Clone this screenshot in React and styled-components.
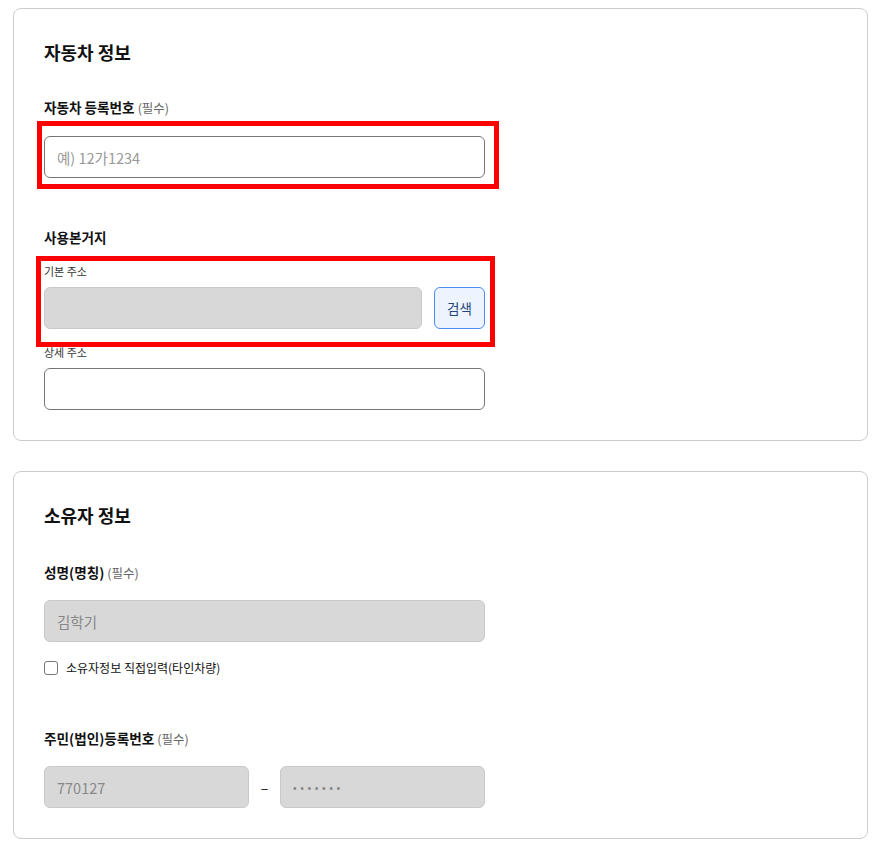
import React from "react";
import styled, { createGlobalStyle } from "styled-components";

const Global = createGlobalStyle`
  * { box-sizing: border-box; }
  body {
    margin: 0;
    background: #fff;
    font-family: "Noto Sans CJK KR", "Noto Sans", sans-serif;
    color: #111;
  }
`;

const Page = styled.div`
  padding: 8px 15px 20px 13px;
  display: flex;
  flex-direction: column;
  gap: 30px;
`;

const Card = styled.section`
  border: 1px solid #cccccc;
  border-radius: 8px;
  padding: 30px 30px 30px;
  display: flex;
  flex-direction: column;
`;

const Title = styled.h2`
  margin: 0 0 ${(p) => p.$gap || 32}px;
  font-size: 18px;
  line-height: 26px;
  font-weight: 700;
  color: #111;
`;

const Label = styled.div`
  display: flex;
  align-items: baseline;
  height: 20px;
  font-size: 13.6px;
  line-height: 20px;
  font-weight: 700;
  color: #111;
  margin-bottom: ${(p) => p.$mb ?? 19}px;
  margin-top: ${(p) => p.$mt ?? 0}px;
`;

const Req = styled.span`
  font-weight: 400;
  font-size: 12.5px;
  line-height: 20px;
  color: #666;
  margin-left: 3px;
`;

const SubLabel = styled.div`
  font-size: 11px;
  line-height: 16px;
  color: #333;
  margin-bottom: 8px;
  margin-top: ${(p) => p.$mt ?? 0}px;
`;

const Field = styled.div`
  position: relative;
  width: 441px;
`;

const Highlight = styled.div`
  position: absolute;
  left: ${(p) => p.$l}px;
  top: ${(p) => p.$t}px;
  right: ${(p) => p.$r}px;
  bottom: ${(p) => p.$b}px;
  border: 5px solid #ff0000;
  pointer-events: none;
`;

const Input = styled.input`
  display: block;
  width: ${(p) => (p.$w ? p.$w + "px" : "100%")};
  height: 42px;
  padding: 0 12px;
  border-radius: 6px;
  border: 1px solid ${(p) => (p.$disabled ? "#c9c9c9" : "#777777")};
  background: ${(p) => (p.$disabled ? "#d8d8d8" : "#ffffff")};
  font-family: inherit;
  font-size: 14.5px;
  color: #888;
  outline: none;
  &::placeholder {
    color: #999;
  }
  &[type="password"] {
    letter-spacing: 3.5px;
    font-size: 11px;
    color: #888;
  }
`;

const Row = styled.div`
  display: flex;
  align-items: center;
  gap: 12px;
  width: 441px;
`;

const SearchButton = styled.button`
  width: 51px;
  height: 42px;
  flex: none;
  border: 1px solid #4a8cf0;
  border-radius: 6px;
  background: #edf4ff;
  color: #24467e;
  font-family: inherit;
  font-size: 13.5px;
  cursor: pointer;
  padding: 0;
`;

const CheckRow = styled.label`
  display: flex;
  align-items: center;
  gap: 8px;
  margin-top: 18px;
  font-size: 12px;
  line-height: 16px;
  color: #111;
`;

const Box = styled.span`
  width: 14px;
  height: 14px;
  border: 1px solid #767676;
  border-radius: 3px;
  background: #fff;
  flex: none;
`;

const Dash = styled.span`
  width: 31px;
  text-align: center;
  font-size: 14px;
  color: #111;
  flex: none;
`;

const SplitRow = styled.div`
  display: flex;
  align-items: center;
  width: 441px;
`;

export default function App() {
  return (
    <>
      <Global />
      <Page>
        <Card>
          <Title $gap={32}>자동차 정보</Title>
          <Label>
            자동차 등록번호<Req>(필수)</Req>
          </Label>
          <Field>
            <Input placeholder="예) 12가1234" />
            <Highlight $l={-7} $t={-15} $r={-14} $b={-11} />
          </Field>

          <Label $mt={49} $mb={16}>사용본거지</Label>
          <Field>
            <SubLabel>기본 주소</SubLabel>
            <Row>
              <Input $disabled readOnly />
              <SearchButton>검색</SearchButton>
            </Row>
            <Highlight $l={-8} $t={-7} $r={-10} $b={-18} />
          </Field>
          <Field>
            <SubLabel $mt={15}>상세 주소</SubLabel>
            <Input />
          </Field>
        </Card>

        <Card>
          <Title $gap={34}>소유자 정보</Title>
          <Label $mb={18}>
            성명(명칭)<Req>(필수)</Req>
          </Label>
          <Field>
            <Input $disabled readOnly value="김학기" />
          </Field>
          <CheckRow>
            <Box />
            소유자정보 직접입력(타인차량)
          </CheckRow>
          <Label $mt={52} $mb={18}>
            주민(법인)등록번호<Req>(필수)</Req>
          </Label>
          <SplitRow>
            <Input $disabled $w={205} readOnly value="770127" />
            <Dash>–</Dash>
            <Input $disabled $w={205} readOnly type="password" value="1234567" />
          </SplitRow>
        </Card>
      </Page>
    </>
  );
}
